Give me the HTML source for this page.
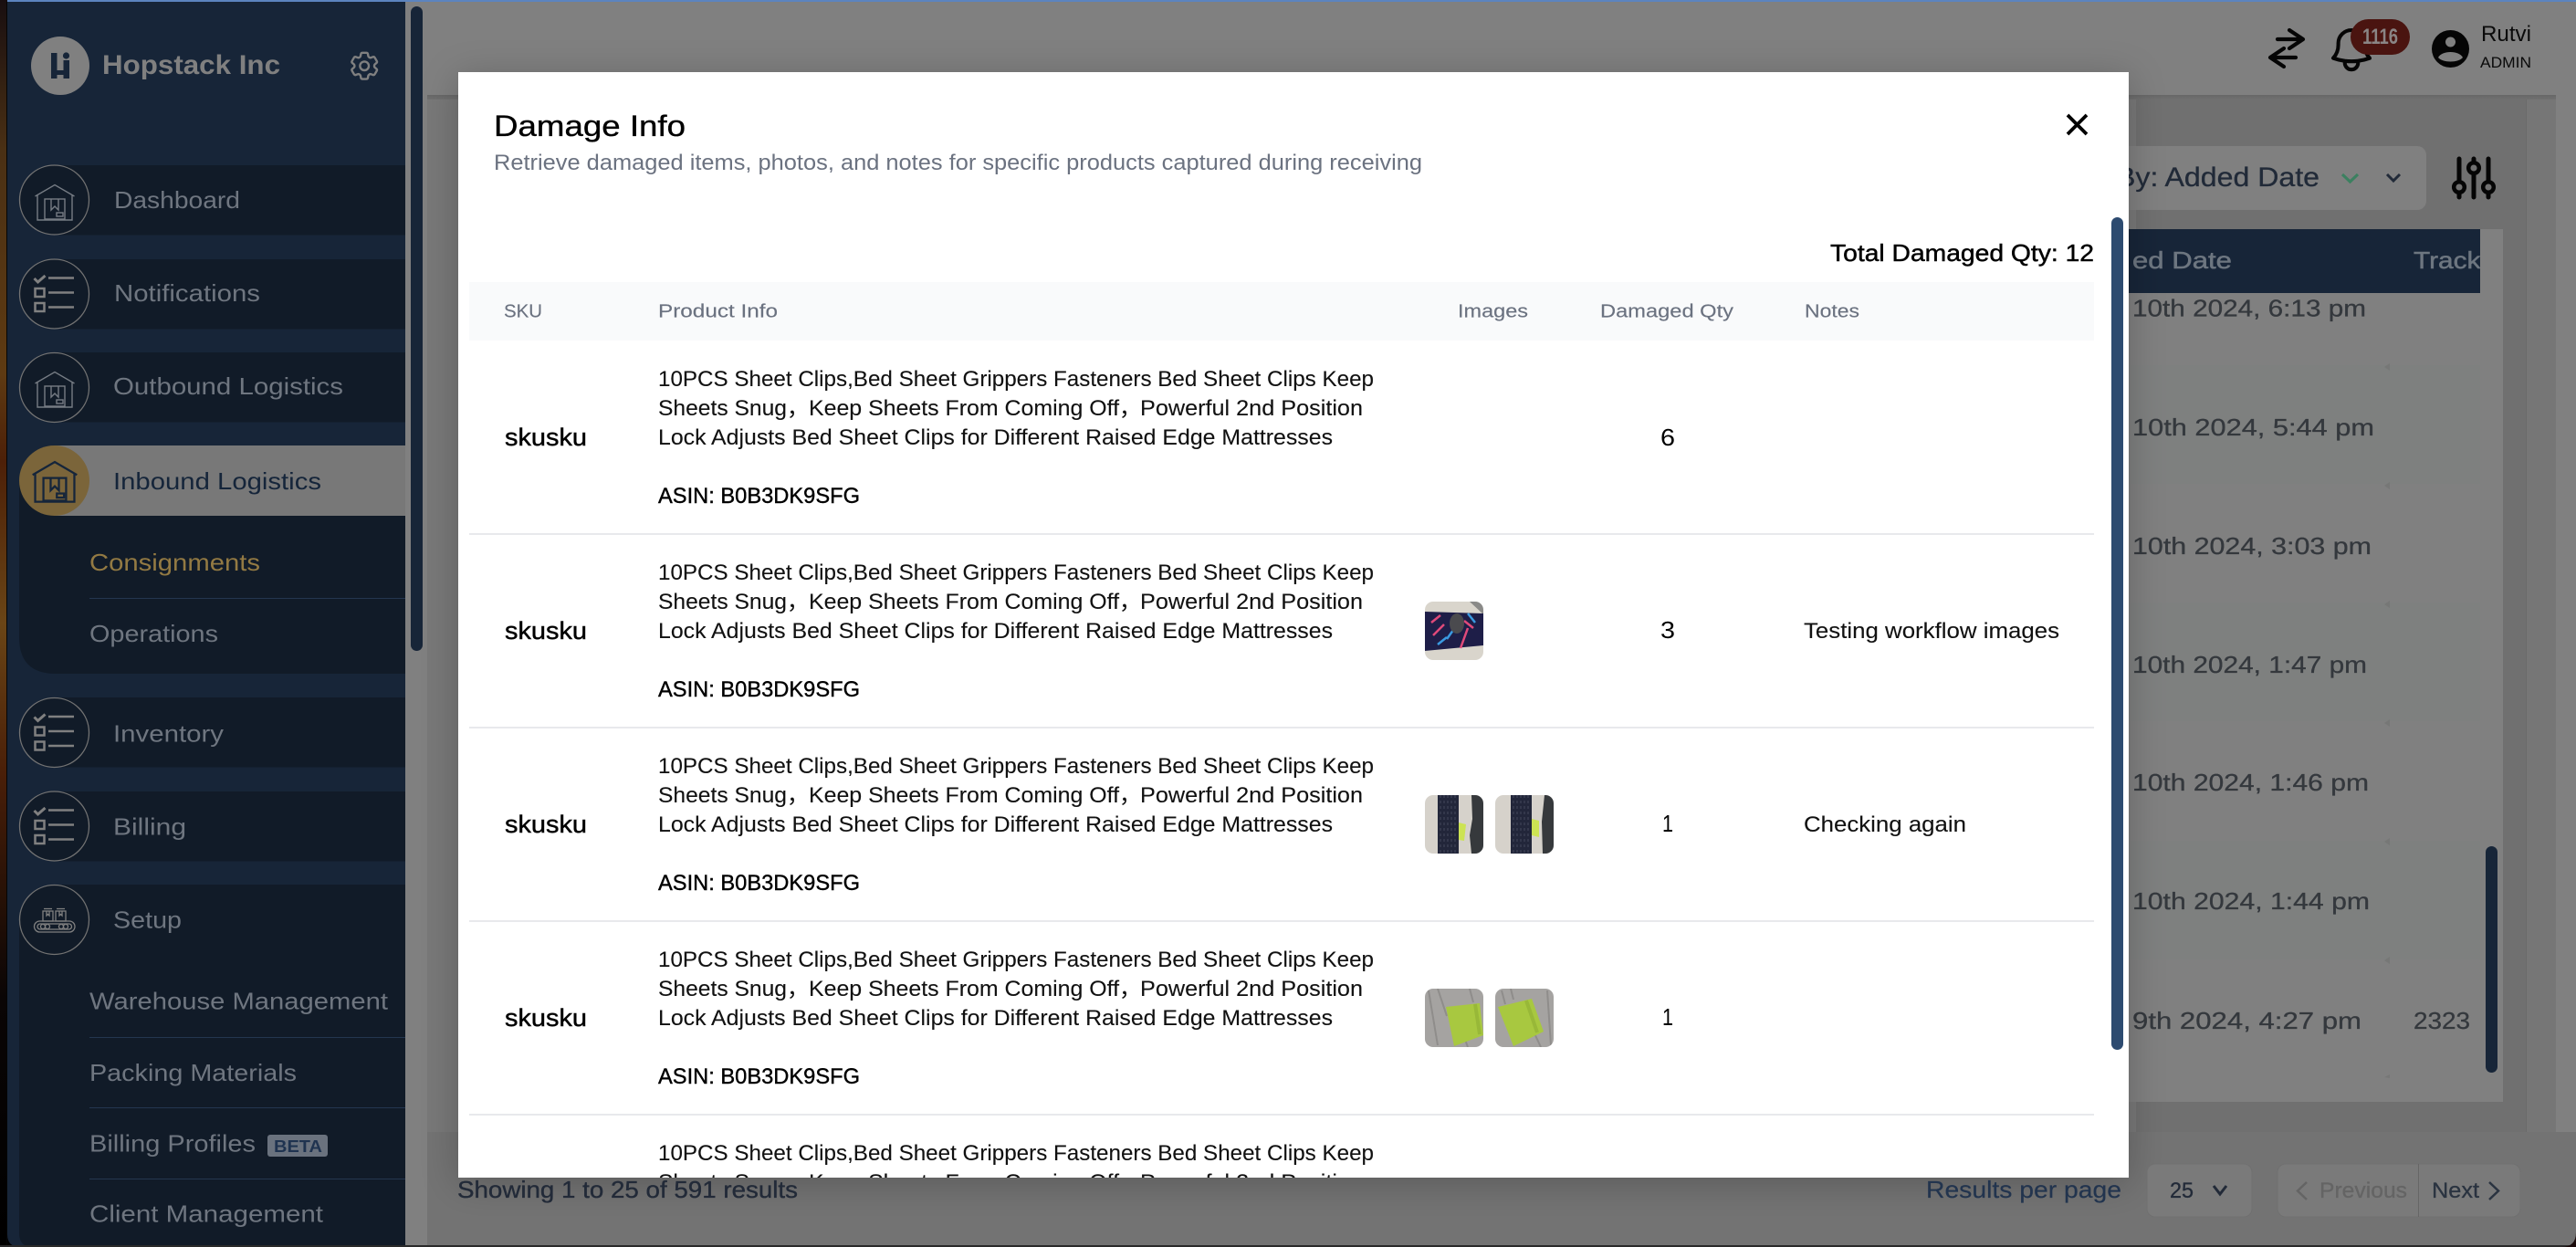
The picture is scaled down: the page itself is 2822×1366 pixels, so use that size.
<!DOCTYPE html>
<html lang="en">
<head>
<meta charset="utf-8">
<title>Damage Info</title>
<style>
html,body{margin:0;padding:0;width:2822px;height:1366px;overflow:hidden;background:#000}
svg{display:block}
text{font-family:"Liberation Sans","Noto Sans CJK SC",sans-serif;white-space:pre}
.nav{font-size:26px;fill:#6f7680}
.r{font-size:24px;fill:#111;stroke:#111;stroke-width:.1}
.a{font-size:24px;fill:#000;stroke:#000;stroke-width:.4}
.s{font-size:27px;fill:#000;stroke:#000;stroke-width:.45}
.h{font-size:20px;fill:#6b7280;stroke:#6b7280;stroke-width:.15}
.d{font-size:26px;fill:#34383d;stroke:#34383d;stroke-width:.3}
</style>
</head>
<body>
<svg xmlns="http://www.w3.org/2000/svg" width="2822" height="1366" viewBox="0 0 2822 1366">
<defs>
<linearGradient id="wall" x1="0" y1="0" x2="0" y2="1">
<stop offset="0" stop-color="#180e10"/><stop offset=".12" stop-color="#4a3014"/><stop offset=".3" stop-color="#5e3a12"/><stop offset=".37" stop-color="#4d2008"/><stop offset=".5" stop-color="#6a4516"/><stop offset=".62" stop-color="#4a1f08"/><stop offset=".8" stop-color="#0a0505"/><stop offset="1" stop-color="#000"/>
</linearGradient>
<linearGradient id="hs" x1="0" y1="0" x2="0" y2="1"><stop offset="0" stop-color="#676767"/><stop offset="1" stop-color="#707070"/></linearGradient>
<filter id="ms" x="-10%" y="-15%" width="120%" height="130%"><feDropShadow dx="0" dy="6" stdDeviation="20" flood-color="#000" flood-opacity=".22"/></filter>
<g id="wh" fill="none" stroke-linejoin="miter">
<path d="M-21.5-6 0-18.5 21.5-6M-19-7V20H19V-7"/><rect x="-11" y="-3" width="22" height="22"/><path d="M-4-3V9L0 5 4 9V-3"/><rect x="2" y="12" width="7" height="4"/>
</g>
<g id="ls" fill="none" stroke="#808080">
<path d="M-6.5-17.5H21.5M-6.5-1.500H21.500M-6.500 14.500H21.500" stroke-width="2.400"/>
<path d="M-22-17-18-13-10-20" stroke-width="3"/>
<rect x="-21" y="-6" width="10" height="9" stroke-width="2.500"/><rect x="-21" y="10" width="10" height="9" stroke-width="2.500"/>
</g>
<clipPath id="modal"><rect x="502" y="79" width="1830" height="1211"/></clipPath>
<clipPath id="thead"><rect x="2332" y="251" width="385" height="70"/></clipPath>
<clipPath id="i1"><rect x="1561" y="659" width="64" height="64" rx="9"/></clipPath>
<clipPath id="i2"><rect x="1561" y="871" width="64" height="64" rx="9"/></clipPath>
<clipPath id="i3"><rect x="1638" y="871" width="64" height="64" rx="9"/></clipPath>
<clipPath id="i4"><rect x="1561" y="1083" width="64" height="64" rx="9"/></clipPath>
<clipPath id="i5"><rect x="1638" y="1083" width="64" height="64" rx="9"/></clipPath>
</defs>

<!-- desktop edge -->
<rect x="0" y="0" width="8" height="1366" fill="url(#wall)"/>
<rect x="7" y="0" width="1" height="1366" fill="#050505"/>

<!-- main backgrounds -->
<rect x="444" y="0" width="2378" height="1366" fill="#787878"/>
<rect x="2340" y="104" width="427" height="1136" fill="#707070"/>
<rect x="444" y="0" width="24" height="1366" fill="#808080"/>
<rect x="2800" y="0" width="22" height="1240" fill="#808080"/>
<rect x="2767" y="104" width="33" height="1136" fill="#767676"/>
<rect x="2767" y="104" width="1" height="1136" fill="#6a6a6a"/>
<rect x="468" y="1240" width="2354" height="126" fill="#737373"/>
<rect x="468" y="0" width="2332" height="104" fill="#808080"/>
<rect x="468" y="104" width="2332" height="5" fill="url(#hs)"/>

<!-- sidebar -->
<path d="M8 0H444V1366H22Q8 1366 8 1352Z" fill="#172538"/>
<rect x="450" y="7" width="13" height="706" rx="6.500" fill="#172538"/>

<circle cx="66" cy="72" r="32" fill="#808080"/>
<g fill="#172538">
<rect x="56" y="58" width="6.500" height="28"/><rect x="56" y="77" width="20" height="5"/><rect x="69.500" y="66" width="6.500" height="20"/><circle cx="72.500" cy="61" r="3.600"/>
</g>
<text x="112" y="81" font-size="30" font-weight="700" fill="#808080" textLength="195" lengthAdjust="spacingAndGlyphs">Hopstack Inc</text>
<g transform="translate(380 53) scale(1.600)" fill="none" stroke="#808080" stroke-width="1.500">
<path d="M9.594 3.94c.09-.542.56-.94 1.11-.94h2.593c.55 0 1.02.398 1.11.94l.213 1.281c.063.374.313.686.645.87.074.04.147.083.22.127.324.196.72.257 1.075.124l1.217-.456a1.125 1.125 0 011.37.49l1.296 2.247a1.125 1.125 0 01-.26 1.431l-1.003.827c-.293.24-.438.613-.431.992a6.759 6.759 0 010 .255c-.007.378.138.75.43.99l1.005.828c.424.35.534.954.26 1.43l-1.298 2.247a1.125 1.125 0 01-1.369.491l-1.217-.456c-.355-.133-.75-.072-1.076.124a6.57 6.57 0 01-.22.128c-.331.183-.581.495-.644.869l-.213 1.28c-.09.543-.56.941-1.11.941h-2.594c-.55 0-1.02-.398-1.11-.94l-.213-1.281c-.062-.374-.312-.686-.644-.87a6.52 6.52 0 01-.22-.127c-.325-.196-.72-.257-1.076-.124l-1.217.456a1.125 1.125 0 01-1.369-.49l-1.297-2.247a1.125 1.125 0 01.26-1.431l1.004-.827c.292-.24.437-.613.43-.992a6.932 6.932 0 010-.255c.007-.378-.138-.75-.43-.99l-1.004-.828a1.125 1.125 0 01-.26-1.43l1.297-2.247a1.125 1.125 0 011.37-.491l1.216.456c.356.133.751.072 1.076-.124.072-.044.146-.087.22-.128.332-.183.582-.495.644-.869l.214-1.281z"/><circle cx="12" cy="12" r="3"/>
</g>

<!-- nav bars -->
<g fill="#111b28">
<rect x="59" y="181" width="385" height="76.500"/>
<rect x="59" y="284" width="385" height="76.500"/>
<rect x="59" y="386" width="385" height="76.500"/>
<path d="M21 527H444V738H61Q21 738 21 698Z"/>
<rect x="59" y="764" width="385" height="76.500"/>
<rect x="59" y="867" width="385" height="76.500"/>
<path d="M59 969H444V1366H36Q21 1366 21 1351V1007H59Z"/>
</g>
<rect x="59" y="488" width="385" height="77" fill="#787878"/>

<g fill="#111b28" stroke="#737373" stroke-width="1.300">
<circle cx="59.500" cy="219" r="38"/><circle cx="59.500" cy="322" r="38"/><circle cx="59.500" cy="424.500" r="38"/>
<circle cx="59.500" cy="802.500" r="38"/><circle cx="59.500" cy="905" r="38"/><circle cx="59.500" cy="1007.500" r="38"/>
</g>
<circle cx="59.500" cy="526.500" r="38.500" fill="#7b653a"/>

<use href="#wh" transform="translate(60 221)" stroke="#767c84" stroke-width="1.400"/>
<use href="#wh" transform="translate(60 426)" stroke="#767c84" stroke-width="1.400"/>
<use href="#wh" transform="translate(60 527) scale(1.130)" stroke="#15253a" stroke-width="2"/>
<use href="#ls" transform="translate(59.500 322)"/>
<use href="#ls" transform="translate(59.500 802.500)"/>
<use href="#ls" transform="translate(59.500 905)"/>
<g fill="none" stroke="#808080" stroke-width="1.300">
<rect x="37.500" y="1009" width="44.500" height="12" rx="6"/><rect x="41" y="1012" width="37.500" height="6" rx="3"/>
<circle cx="47" cy="1015" r="2.500"/><circle cx="52" cy="1015" r="2.500"/><circle cx="67" cy="1015" r="2.500"/><circle cx="72" cy="1015" r="2.500"/>
<rect x="47" y="998" width="11" height="11"/><rect x="61" y="998" width="11" height="11"/>
<path d="M48 995.500h9M62 995.500h9M51 998v5l1.500-1.500 1.500 1.500v-5M65 998v5l1.500-1.500 1.500 1.500v-5"/>
</g>

<text class="nav" x="125" y="228" textLength="138" lengthAdjust="spacingAndGlyphs">Dashboard</text>
<text class="nav" x="125" y="330" textLength="160" lengthAdjust="spacingAndGlyphs">Notifications</text>
<text class="nav" x="124" y="432" textLength="252" lengthAdjust="spacingAndGlyphs">Outbound Logistics</text>
<text class="nav" x="124" y="536" textLength="228" lengthAdjust="spacingAndGlyphs" style="fill:#15253a">Inbound Logistics</text>
<text class="nav" x="98" y="625" textLength="187" lengthAdjust="spacingAndGlyphs" style="fill:#937a43">Consignments</text>
<rect x="98" y="655" width="346" height="1" fill="#24364f"/>
<text class="nav" x="98" y="703" textLength="141" lengthAdjust="spacingAndGlyphs">Operations</text>
<text class="nav" x="124" y="812.500" textLength="121" lengthAdjust="spacingAndGlyphs">Inventory</text>
<text class="nav" x="124" y="914.500" textLength="80" lengthAdjust="spacingAndGlyphs">Billing</text>
<text class="nav" x="124" y="1016.500" textLength="75" lengthAdjust="spacingAndGlyphs">Setup</text>
<text class="nav" x="98" y="1105.500" textLength="327" lengthAdjust="spacingAndGlyphs">Warehouse Management</text>
<rect x="98" y="1136" width="346" height="1" fill="#24364f"/>
<text class="nav" x="98" y="1184" textLength="227" lengthAdjust="spacingAndGlyphs">Packing Materials</text>
<rect x="98" y="1213" width="346" height="1" fill="#24364f"/>
<text class="nav" x="98" y="1261.500" textLength="182" lengthAdjust="spacingAndGlyphs">Billing Profiles</text>
<rect x="293" y="1243" width="66" height="24" rx="3" fill="#6a727e"/>
<text x="300" y="1262" font-size="18" font-weight="700" fill="#1f3350" textLength="53" lengthAdjust="spacingAndGlyphs">BETA</text>
<rect x="98" y="1291" width="346" height="1" fill="#24364f"/>
<text class="nav" x="98" y="1338.500" textLength="256" lengthAdjust="spacingAndGlyphs">Client Management</text>

<!-- top header -->
<g fill="none" stroke="#050505" stroke-width="4.200" stroke-linecap="round" stroke-linejoin="round">
<path d="M2495 43H2522M2508 33 2523 43 2508 53"/>
<path d="M2515 63H2488M2502 53 2487 63 2502 73"/>
</g>
<g transform="translate(2547.200 25.800) scale(2.400)" fill="none" stroke="#050505" stroke-width="1.700" stroke-linejoin="round">
<path d="M14.857 17.082a23.848 23.848 0 005.454-1.31A8.967 8.967 0 0118 9.75v-.7V9A6 6 0 006 9v.75a8.967 8.967 0 01-2.312 6.022c1.733.64 3.56 1.085 5.455 1.31m5.714 0a24.255 24.255 0 01-5.714 0m5.714 0a3 3 0 11-5.714 0"/>
</g>
<rect x="2575" y="21" width="65" height="39" rx="19.500" fill="#4a1410"/>
<text x="2588" y="48" font-size="24" font-weight="700" fill="#8a8585" textLength="39" lengthAdjust="spacingAndGlyphs">1116</text>
<circle cx="2684.500" cy="53.500" r="20.500" fill="#050505"/>
<circle cx="2684.500" cy="46" r="5.500" fill="#808080"/>
<path d="M2671 63c4-8 23-8 27 0-5 6-22 6-27 0z" fill="#808080"/>
<text x="2718" y="45" font-size="24" fill="#0a0a0a" textLength="55" lengthAdjust="spacingAndGlyphs">Rutvi</text>
<text x="2717" y="74" font-size="17" fill="#0a0a0a" textLength="56" lengthAdjust="spacingAndGlyphs">ADMIN</text>

<!-- sort dropdown -->
<rect x="2200" y="160" width="458" height="70" rx="10" fill="#808080"/>
<text x="2318" y="204" font-size="30" fill="#212a38" stroke="#212a38" stroke-width=".3" textLength="223" lengthAdjust="spacingAndGlyphs">By: Added Date</text>
<path d="M2566 191 2574.500 199 2583 191" fill="none" stroke="#3c8060" stroke-width="3.200"/>
<path d="M2615 191 2622 198 2629 191" fill="none" stroke="#212a38" stroke-width="3"/>
<g stroke="#050505" stroke-width="5" stroke-linecap="round" fill="none">
<path d="M2694 174V216M2710 174V216M2726 174V216"/>
<g fill="#707070" stroke-width="4.500">
<circle cx="2694" cy="205" r="5.800"/><circle cx="2710" cy="184" r="5.800"/><circle cx="2726" cy="205" r="5.800"/>
</g>
</g>

<!-- background table -->
<rect x="2332" y="251" width="410" height="956" fill="#808080"/>
<g fill="#7e807f">
<rect x="2332" y="400" width="385" height="130"/><rect x="2332" y="660" width="385" height="130"/><rect x="2332" y="921" width="385" height="130"/>
</g>
<g fill="#767776">
<path d="M2612 402l6-4v8zM2612 532l6-4v8zM2612 662l6-4v8zM2612 792l6-4v8zM2612 922l6-4v8zM2612 1052l6-4v8zM2612 1180l6-3v4z"/>
</g>
<rect x="2332" y="251" width="385" height="70" fill="#172538"/>
<g clip-path="url(#thead)">
<text x="2336" y="294" font-size="26" fill="#6d7680" stroke="#6d7680" stroke-width=".5" textLength="109" lengthAdjust="spacingAndGlyphs">ed Date</text>
<text x="2644" y="294" font-size="26" fill="#6d7680" stroke="#6d7680" stroke-width=".5" textLength="80" lengthAdjust="spacingAndGlyphs">Tracki</text>
</g>
<text class="d" x="2336" y="346.500" textLength="256" lengthAdjust="spacingAndGlyphs">10th 2024, 6:13 pm</text>
<text class="d" x="2336" y="477" textLength="265" lengthAdjust="spacingAndGlyphs">10th 2024, 5:44 pm</text>
<text class="d" x="2336" y="607" textLength="262" lengthAdjust="spacingAndGlyphs">10th 2024, 3:03 pm</text>
<text class="d" x="2336" y="737" textLength="257" lengthAdjust="spacingAndGlyphs">10th 2024, 1:47 pm</text>
<text class="d" x="2336" y="866" textLength="259" lengthAdjust="spacingAndGlyphs">10th 2024, 1:46 pm</text>
<text class="d" x="2336" y="996" textLength="260" lengthAdjust="spacingAndGlyphs">10th 2024, 1:44 pm</text>
<text class="d" x="2336" y="1127" textLength="251" lengthAdjust="spacingAndGlyphs">9th 2024, 4:27 pm</text>
<text class="d" x="2644" y="1127" textLength="62" lengthAdjust="spacingAndGlyphs">2323</text>
<rect x="2723" y="927" width="13" height="248" rx="6.500" fill="#172538"/>

<!-- corners -->
<rect x="0" y="1364" width="2822" height="2" fill="#2a2a2a"/>
<path d="M2822 1350V1366H2806Q2822 1366 2822 1350Z" fill="#1a0a0a"/>

<!-- modal shadow + body -->
<rect x="502" y="79" width="1830" height="1211" fill="#fff" filter="url(#ms)"/>

<!-- footer -->
<text x="501" y="1312" font-size="26" fill="#222a38" stroke="#222a38" stroke-width=".35" textLength="373" lengthAdjust="spacingAndGlyphs">Showing 1 to 25 of 591 results</text>
<text x="2110" y="1312" font-size="26" fill="#22344e" stroke="#22344e" stroke-width=".2" textLength="214" lengthAdjust="spacingAndGlyphs">Results per page</text>
<rect x="2352" y="1275" width="115" height="58" rx="9" fill="#7a7a7a" stroke="#707070" stroke-width="1"/>
<text x="2377" y="1312" font-size="24" fill="#222a38" stroke="#222a38" stroke-width=".3" textLength="26" lengthAdjust="spacingAndGlyphs">25</text>
<path d="M2425 1299 2432 1308 2439 1299" fill="none" stroke="#222a38" stroke-width="3"/>
<rect x="2495" y="1275" width="266" height="58" rx="9" fill="#7a7a7a" stroke="#707070" stroke-width="1"/>
<rect x="2649" y="1275" width="1" height="58" fill="#666"/>
<path d="M2527 1295 2517 1304.500 2527 1314" fill="none" stroke="#646464" stroke-width="2.500"/>
<text x="2541" y="1312" font-size="24" fill="#646464" stroke="#646464" stroke-width=".3" textLength="96" lengthAdjust="spacingAndGlyphs">Previous</text>
<text x="2664" y="1312" font-size="24" fill="#2a3340" stroke="#2a3340" stroke-width=".3" textLength="52" lengthAdjust="spacingAndGlyphs">Next</text>
<path d="M2727 1295 2737 1304.500 2727 1314" fill="none" stroke="#2a3340" stroke-width="2.500"/>

<rect x="0" y="0" width="2822" height="2" fill="#5c84bf"/>
<rect x="0" y="0" width="8" height="2" fill="#180e10"/>

<!-- modal content -->
<text x="541" y="149" font-size="32" fill="#000" stroke="#000" stroke-width=".35" textLength="210" lengthAdjust="spacingAndGlyphs">Damage Info</text>
<text x="541" y="186" font-size="24" fill="#6b7280" textLength="1017" lengthAdjust="spacingAndGlyphs">Retrieve damaged items, photos, and notes for specific products captured during receiving</text>
<path d="M2265 126 2286 147M2286 126 2265 147" stroke="#000" stroke-width="3.800" fill="none"/>
<rect x="2313" y="238" width="13" height="912" rx="6.500" fill="#2d4b70"/>
<text x="2005" y="286" font-size="26" fill="#000" stroke="#000" stroke-width=".45" textLength="289" lengthAdjust="spacingAndGlyphs">Total Damaged Qty: 12</text>

<rect x="514" y="309" width="1780" height="64" fill="#f9fafb"/>
<text class="h" x="552" y="347.500" textLength="42" lengthAdjust="spacingAndGlyphs">SKU</text>
<text class="h" x="721" y="347.500" textLength="131" lengthAdjust="spacingAndGlyphs">Product Info</text>
<text class="h" x="1597" y="347.500" textLength="77" lengthAdjust="spacingAndGlyphs">Images</text>
<text class="h" x="1753" y="347.500" textLength="146" lengthAdjust="spacingAndGlyphs">Damaged Qty</text>
<text class="h" x="1977" y="347.500" textLength="60" lengthAdjust="spacingAndGlyphs">Notes</text>

<g fill="#e8e9ec">
<rect x="514" y="584" width="1780" height="2"/><rect x="514" y="796" width="1780" height="2"/><rect x="514" y="1008" width="1780" height="2"/><rect x="514" y="1220" width="1780" height="2"/>
</g>

<g clip-path="url(#modal)">
<!-- row 1 -->
<text class="r" x="721" y="423" textLength="784" lengthAdjust="spacingAndGlyphs">10PCS Sheet Clips,Bed Sheet Grippers Fasteners Bed Sheet Clips Keep</text>
<text class="r" x="721" y="455" textLength="141" lengthAdjust="spacingAndGlyphs">Sheets Snug</text><text class="r" x="862" y="455">，</text>
<text class="r" x="886" y="455" textLength="340" lengthAdjust="spacingAndGlyphs">Keep Sheets From Coming Off</text><text class="r" x="1226" y="455">，</text>
<text class="r" x="1249" y="455" textLength="244" lengthAdjust="spacingAndGlyphs">Powerful 2nd Position</text>
<text class="r" x="721" y="487" textLength="739" lengthAdjust="spacingAndGlyphs">Lock Adjusts Bed Sheet Clips for Different Raised Edge Mattresses</text>
<text class="a" x="721" y="551" textLength="221" lengthAdjust="spacingAndGlyphs">ASIN: B0B3DK9SFG</text>
<text class="s" x="553" y="488" textLength="90" lengthAdjust="spacingAndGlyphs">skusku</text>
<text x="1819" y="488" font-size="26" fill="#000" textLength="16" lengthAdjust="spacingAndGlyphs">6</text>
<!-- row 2 -->
<text class="r" x="721" y="635" textLength="784" lengthAdjust="spacingAndGlyphs">10PCS Sheet Clips,Bed Sheet Grippers Fasteners Bed Sheet Clips Keep</text>
<text class="r" x="721" y="667" textLength="141" lengthAdjust="spacingAndGlyphs">Sheets Snug</text><text class="r" x="862" y="667">，</text>
<text class="r" x="886" y="667" textLength="340" lengthAdjust="spacingAndGlyphs">Keep Sheets From Coming Off</text><text class="r" x="1226" y="667">，</text>
<text class="r" x="1249" y="667" textLength="244" lengthAdjust="spacingAndGlyphs">Powerful 2nd Position</text>
<text class="r" x="721" y="699" textLength="739" lengthAdjust="spacingAndGlyphs">Lock Adjusts Bed Sheet Clips for Different Raised Edge Mattresses</text>
<text class="a" x="721" y="763" textLength="221" lengthAdjust="spacingAndGlyphs">ASIN: B0B3DK9SFG</text>
<text class="s" x="553" y="700" textLength="90" lengthAdjust="spacingAndGlyphs">skusku</text>
<text x="1819" y="699" font-size="26" fill="#000" textLength="16" lengthAdjust="spacingAndGlyphs">3</text>
<text class="r" x="1976" y="699" textLength="280" lengthAdjust="spacingAndGlyphs">Testing workflow images</text>
<!-- row 3 -->
<text class="r" x="721" y="847" textLength="784" lengthAdjust="spacingAndGlyphs">10PCS Sheet Clips,Bed Sheet Grippers Fasteners Bed Sheet Clips Keep</text>
<text class="r" x="721" y="879" textLength="141" lengthAdjust="spacingAndGlyphs">Sheets Snug</text><text class="r" x="862" y="879">，</text>
<text class="r" x="886" y="879" textLength="340" lengthAdjust="spacingAndGlyphs">Keep Sheets From Coming Off</text><text class="r" x="1226" y="879">，</text>
<text class="r" x="1249" y="879" textLength="244" lengthAdjust="spacingAndGlyphs">Powerful 2nd Position</text>
<text class="r" x="721" y="911" textLength="739" lengthAdjust="spacingAndGlyphs">Lock Adjusts Bed Sheet Clips for Different Raised Edge Mattresses</text>
<text class="a" x="721" y="975" textLength="221" lengthAdjust="spacingAndGlyphs">ASIN: B0B3DK9SFG</text>
<text class="s" x="553" y="912" textLength="90" lengthAdjust="spacingAndGlyphs">skusku</text>
<text x="1821" y="911" font-size="26" fill="#000" textLength="12" lengthAdjust="spacingAndGlyphs">1</text>
<text class="r" x="1976" y="911" textLength="178" lengthAdjust="spacingAndGlyphs">Checking again</text>
<!-- row 4 -->
<text class="r" x="721" y="1059" textLength="784" lengthAdjust="spacingAndGlyphs">10PCS Sheet Clips,Bed Sheet Grippers Fasteners Bed Sheet Clips Keep</text>
<text class="r" x="721" y="1091" textLength="141" lengthAdjust="spacingAndGlyphs">Sheets Snug</text><text class="r" x="862" y="1091">，</text>
<text class="r" x="886" y="1091" textLength="340" lengthAdjust="spacingAndGlyphs">Keep Sheets From Coming Off</text><text class="r" x="1226" y="1091">，</text>
<text class="r" x="1249" y="1091" textLength="244" lengthAdjust="spacingAndGlyphs">Powerful 2nd Position</text>
<text class="r" x="721" y="1123" textLength="739" lengthAdjust="spacingAndGlyphs">Lock Adjusts Bed Sheet Clips for Different Raised Edge Mattresses</text>
<text class="a" x="721" y="1187" textLength="221" lengthAdjust="spacingAndGlyphs">ASIN: B0B3DK9SFG</text>
<text class="s" x="553" y="1124" textLength="90" lengthAdjust="spacingAndGlyphs">skusku</text>
<text x="1821" y="1123" font-size="26" fill="#000" textLength="12" lengthAdjust="spacingAndGlyphs">1</text>
<!-- row 5 -->
<text class="r" x="721" y="1271" textLength="784" lengthAdjust="spacingAndGlyphs">10PCS Sheet Clips,Bed Sheet Grippers Fasteners Bed Sheet Clips Keep</text>
<text class="r" x="721" y="1303" textLength="141" lengthAdjust="spacingAndGlyphs">Sheets Snug</text><text class="r" x="862" y="1303">，</text>
<text class="r" x="886" y="1303" textLength="340" lengthAdjust="spacingAndGlyphs">Keep Sheets From Coming Off</text><text class="r" x="1226" y="1303">，</text>
<text class="r" x="1249" y="1303" textLength="244" lengthAdjust="spacingAndGlyphs">Powerful 2nd Position</text>
</g>

<!-- thumbnails -->
<g clip-path="url(#i1)">
<rect x="1561" y="659" width="64" height="64" fill="#d9d5cc"/>
<path d="M1610 659h15v14z" fill="#8a8a88"/>
<path d="M1561 670 1625 672 1625 707 1561 713z" fill="#1e1e48"/>
<path d="M1568 682l10-8M1570 696l12-12M1600 710l8-22M1604 680l10 8" stroke="#e04a7a" stroke-width="2.500" fill="none"/>
<path d="M1585 700l10-14M1575 706l10-8M1608 672l8 10" stroke="#3a9ae0" stroke-width="2.500" fill="none"/>
<ellipse cx="1596" cy="683" rx="8" ry="11" fill="#4a4a4e"/>
</g>
<g clip-path="url(#i2)">
<rect x="1561" y="871" width="64" height="64" fill="#d6d2cb"/>
<rect x="1575" y="871" width="23" height="64" fill="#22263a"/>
<path d="M1598 901l8 2-2 18-6-1z" fill="#cce353"/>
<path d="M1612 871h13v64h-13l-2-20 3-18z" fill="#36393c"/>
<path d="M1578 871v64M1582 871v64M1586 871v64M1590 871v64M1594 871v64" stroke="#44485c" stroke-width="1" stroke-dasharray="3 3"/>
</g>
<g clip-path="url(#i3)">
<rect x="1638" y="871" width="64" height="64" fill="#d6d2cb"/>
<rect x="1655" y="871" width="23" height="64" fill="#22263a"/>
<path d="M1678 897l8 2v18l-8-2z" fill="#cce353"/>
<path d="M1692 871h10v64h-12l-1-35z" fill="#36393c"/>
<path d="M1658 871v64M1662 871v64M1666 871v64M1670 871v64M1674 871v64" stroke="#44485c" stroke-width="1" stroke-dasharray="3 3"/>
</g>
<g clip-path="url(#i4)">
<rect x="1561" y="1083" width="64" height="64" fill="#a5a3a1"/>
<path d="M1565 1085l10 60M1575 1083l10 30M1600 1125l8 22M1610 1083l4 15" stroke="#8f8d8b" stroke-width="2" fill="none"/>
<path d="M1584 1103 1621 1099 1625 1134 1593 1146z" fill="#a8c840"/>
<path d="M1616 1100l5 33" stroke="#98b838" stroke-width="4"/>
</g>
<g clip-path="url(#i5)">
<rect x="1638" y="1083" width="64" height="64" fill="#a5a3a1"/>
<path d="M1645 1085l4 15M1655 1083l3 12M1680 1130l8 17M1695 1085l4 60" stroke="#8f8d8b" stroke-width="2" fill="none"/>
<path d="M1641 1103 1678 1094 1691 1130 1658 1146z" fill="#a8c840"/>
<path d="M1672 1096l12 35" stroke="#98b838" stroke-width="4"/>
</g>
</svg>
</body>
</html>
